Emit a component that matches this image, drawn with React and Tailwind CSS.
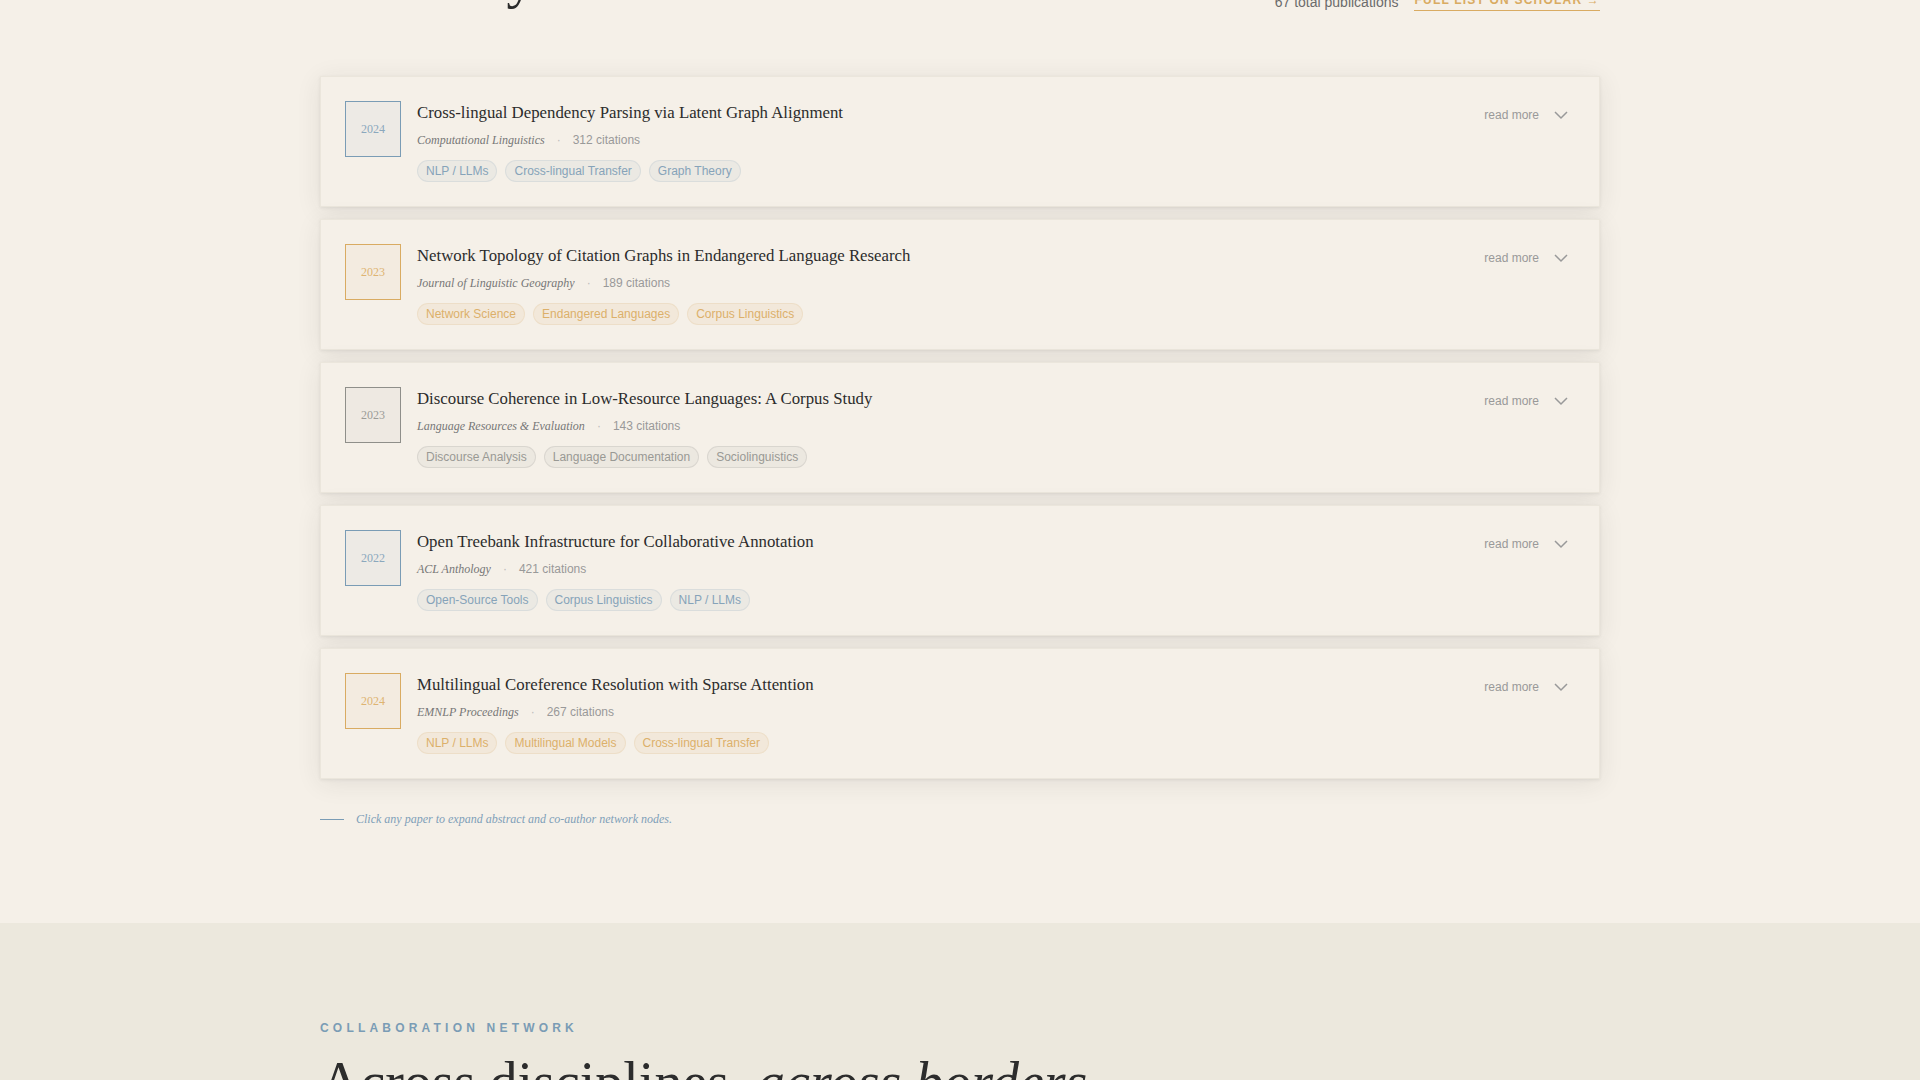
const papers = [
  {
    year: "2024",
    title: "Cross-lingual Dependency Parsing via Latent Graph Alignment",
    venue: "Computational Linguistics",
    citations: 312,
    tags: ["NLP / LLMs", "Cross-lingual Transfer", "Graph Theory"],
    tone: "blue",
  },
  {
    year: "2023",
    title: "Network Topology of Citation Graphs in Endangered Language Research",
    venue: "Journal of Linguistic Geography",
    citations: 189,
    tags: ["Network Science", "Endangered Languages", "Corpus Linguistics"],
    tone: "gold",
  },
  {
    year: "2023",
    title: "Discourse Coherence in Low-Resource Languages: A Corpus Study",
    venue: "Language Resources & Evaluation",
    citations: 143,
    tags: ["Discourse Analysis", "Language Documentation", "Sociolinguistics"],
    tone: "gray",
  },
  {
    year: "2022",
    title: "Open Treebank Infrastructure for Collaborative Annotation",
    venue: "ACL Anthology",
    citations: 421,
    tags: ["Open-Source Tools", "Corpus Linguistics", "NLP / LLMs"],
    tone: "blue",
  },
  {
    year: "2024",
    title: "Multilingual Coreference Resolution with Sparse Attention",
    venue: "EMNLP Proceedings",
    citations: 267,
    tags: ["NLP / LLMs", "Multilingual Models", "Cross-lingual Transfer"],
    tone: "gold",
  },
];

const tones = {
  blue: {
    box: "border-[#7a9cb5] bg-[#7a9cb5]/[0.06] text-[#8ba8bd]",
    tag: "border-[#7a9cb5]/15 bg-[#7a9cb5]/[0.08] text-[#86a3b9]",
  },
  gold: {
    box: "border-[#d9ab62] bg-[#d9ab62]/[0.06] text-[#deb472]",
    tag: "border-[#d9ab62]/15 bg-[#d9ab62]/[0.1] text-[#dcb06a]",
  },
  gray: {
    box: "border-[#8f8f8a] bg-[#8f8f8a]/[0.06] text-[#9c9c98]",
    tag: "border-[#8f8f8a]/20 bg-[#8f8f8a]/[0.08] text-[#999994]",
  },
};

const serif = "font-['Liberation_Serif',serif]";

const PaperCard = ({ paper }) => {
  const tone = tones[paper.tone];
  return (
    <div className="flex items-start gap-4 border border-[#ebe6dc] bg-[#f5f0e8] p-6 shadow-[0_1px_3px_rgba(44,44,44,0.08),0_4px_24px_rgba(44,44,44,0.09)]">
      {/* Year */}
      <div className={`flex h-14 w-14 shrink-0 items-center justify-center border ${serif} text-xs ${tone.box}`}>
        {paper.year}
      </div>

      {/* Body */}
      <div className="min-w-0 flex-1">
        <h3 className={`${serif} text-[16.8px] leading-[24px] text-[#2c2c2c]`}>{paper.title}</h3>
        <div className="mt-[7px] flex items-center gap-3 text-xs">
          <span className={`${serif} italic text-[#777777]`}>{paper.venue}</span>
          <span className="text-[#bbbbbb]">·</span>
          <span className="text-[#999999]">{paper.citations} citations</span>
        </div>
        <div className="mt-3 flex gap-2">
          {paper.tags.map((tag) => (
            <span key={tag} className={`rounded-full border px-2 py-0.5 text-xs ${tone.tag}`}>
              {tag}
            </span>
          ))}
        </div>
      </div>

      {/* Toggle */}
      <div className="flex items-center gap-[15px] pr-[7px] pt-1.5 text-xs text-[#999999]">
        <span>read more</span>
        <svg width="14" height="14" viewBox="0 0 14 14" fill="none" stroke="currentColor" strokeWidth="1.5">
          <path d="M1 4l6 6 6-6" />
        </svg>
      </div>
    </div>
  );
};

const App = () => {
  return (
    <div className="h-screen overflow-hidden bg-[#f5f0e8] font-['Liberation_Sans',sans-serif]">
      {/* Publications, already scrolled past the heading */}
      <section className="-mt-[55px] px-[320px] pb-[96px]">
        <div className="mb-16 flex items-end justify-between">
          <h2 className={`${serif} text-[56px] leading-[1.2] text-[#2c2c2c]`}>Scholarly</h2>
          <div className="flex items-center gap-4">
            <span className="text-sm text-[#6b6b6b]">67 total publications</span>
            <a className="mb-px border-b border-[#d9ab62] pb-0.5 text-xs font-bold tracking-[0.1em] text-[#d9ab62]">
              FULL LIST ON SCHOLAR →
            </a>
          </div>
        </div>

        <div className="flex flex-col gap-3">
          {papers.map((paper) => (
            <PaperCard key={paper.title} paper={paper} />
          ))}
        </div>

        <div className="mt-8 flex items-center gap-3">
          <div className="h-px w-6 bg-[#7a9cb5]" />
          <p className={`${serif} text-xs italic text-[#7f9fb8]`}>
            Click any paper to expand abstract and co-author network nodes.
          </p>
        </div>
      </section>

      {/* Collaboration */}
      <section className="bg-[#ece8dd] px-[320px] pt-[97px]">
        <p className="text-xs font-bold tracking-[0.35em] text-[#7a9cb5]">COLLABORATION NETWORK</p>
        <h2 className={`${serif} mt-[13px] text-[56px] leading-[1.2] text-[#2c2c2c]`}>
          Across disciplines, <em>across borders</em>
        </h2>
      </section>
    </div>
  );
};

export default App;
